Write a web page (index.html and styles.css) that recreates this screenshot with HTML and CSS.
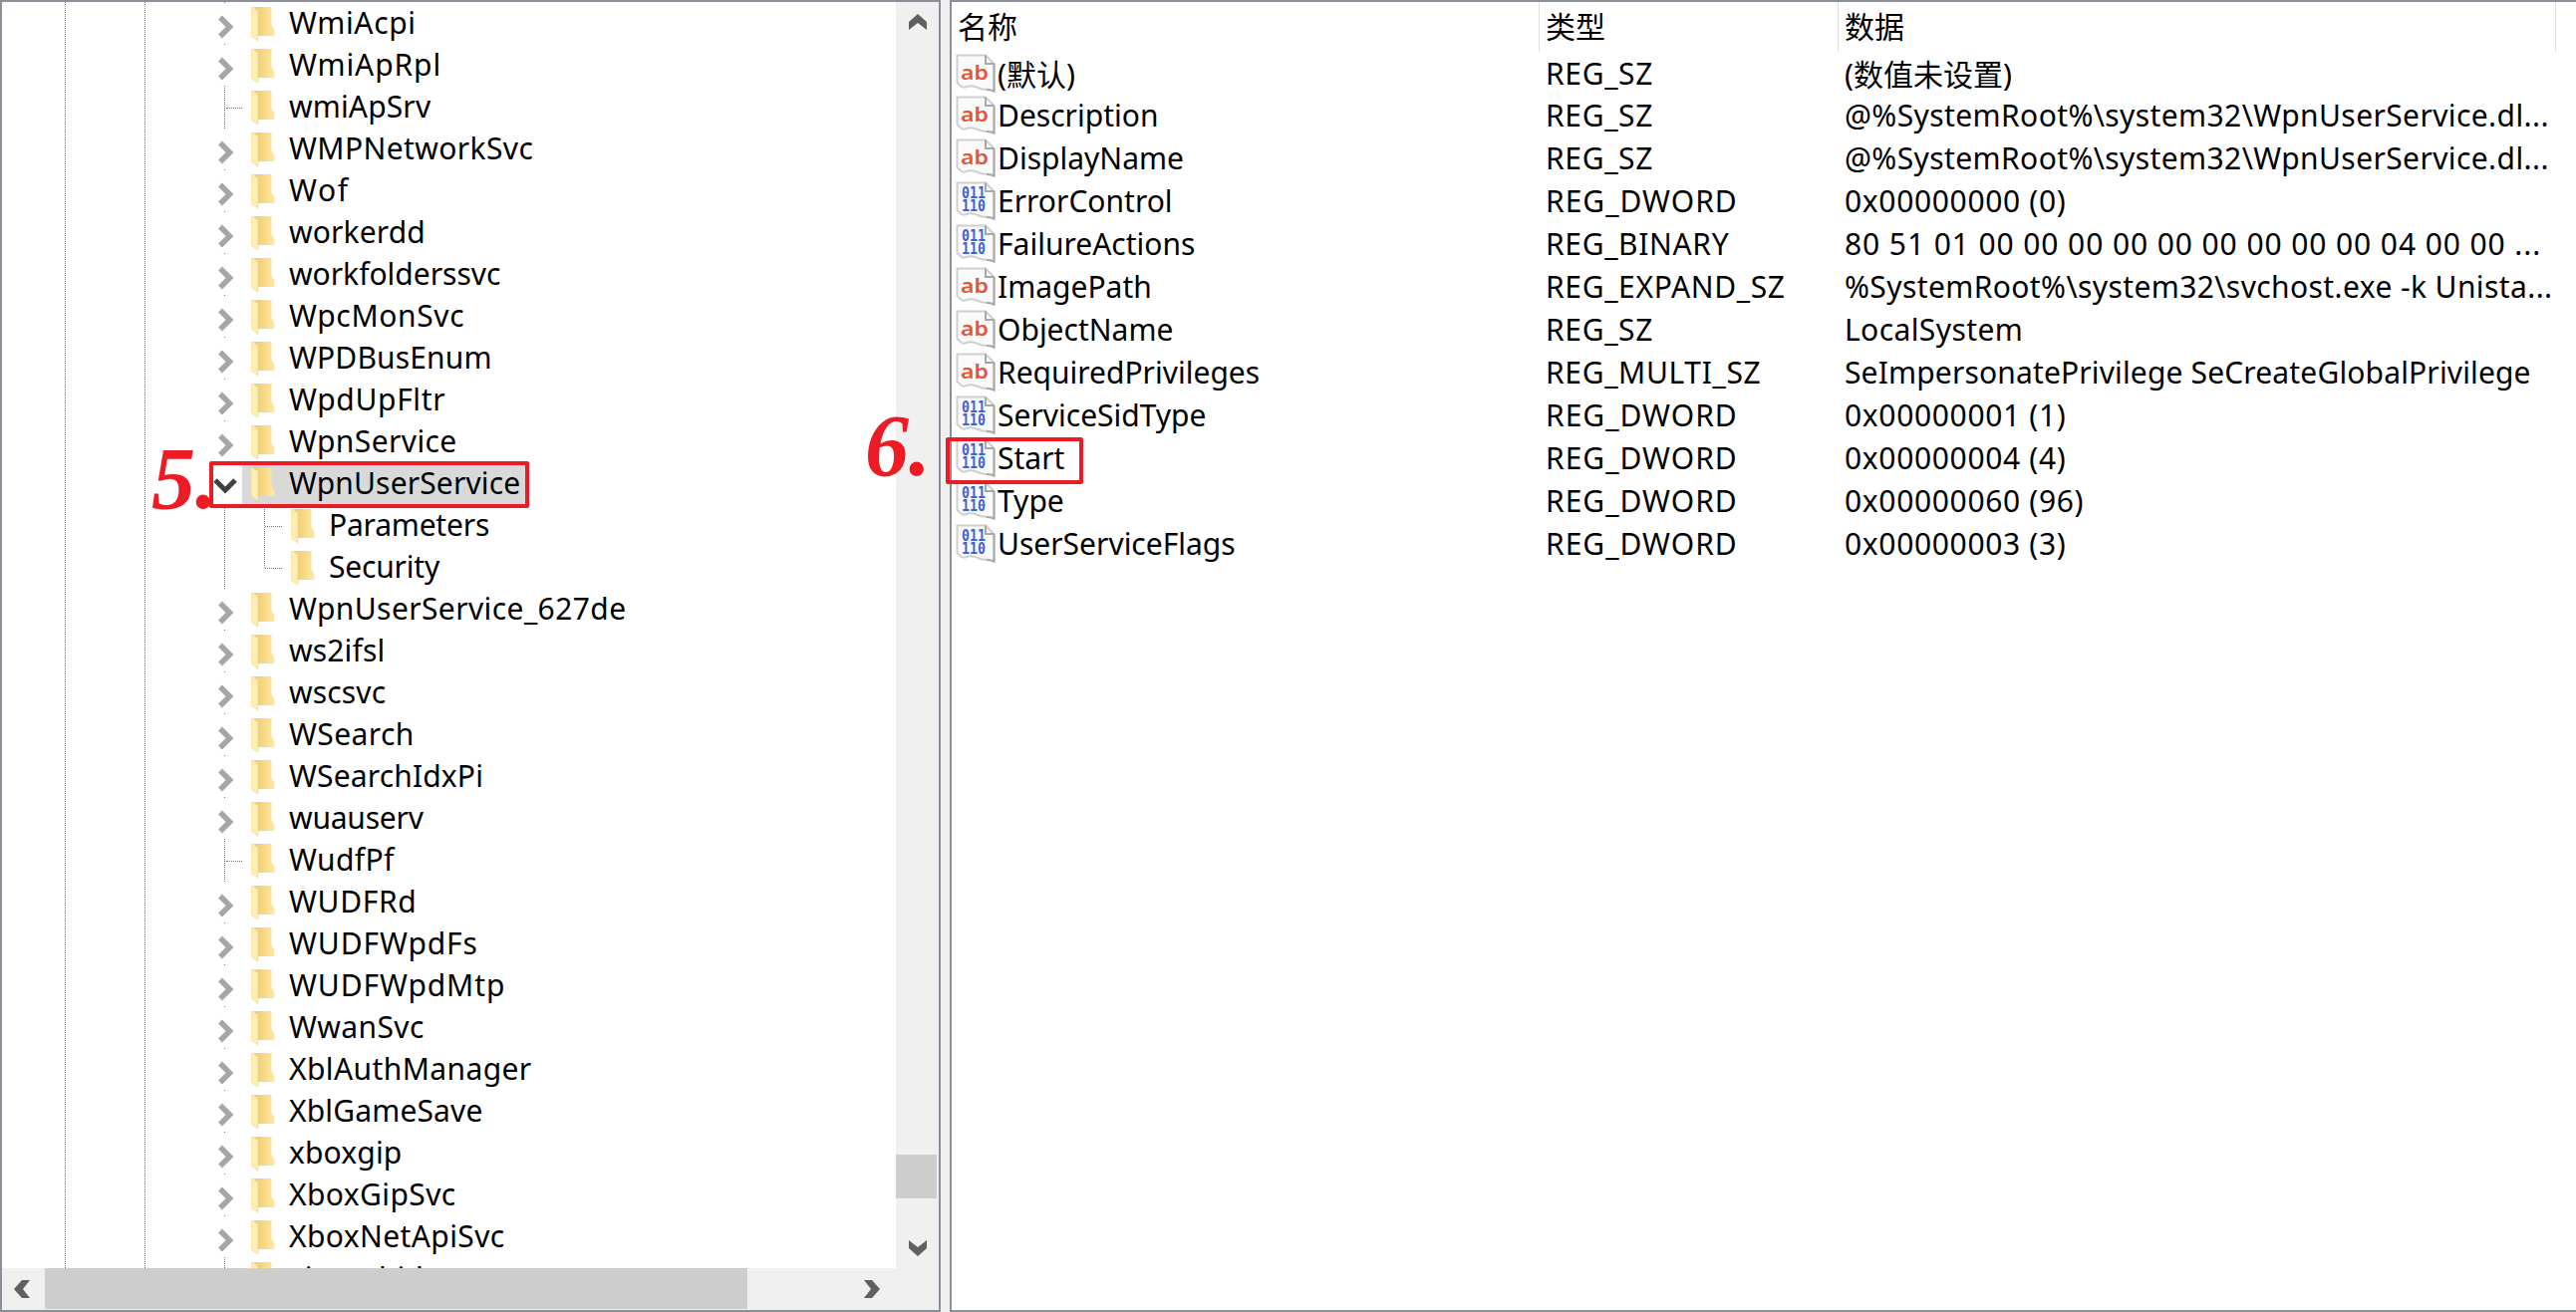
FILE: index.html
```html
<!DOCTYPE html>
<html lang="zh-CN">
<head>
  <meta charset="UTF-8">
  <title>注册表编辑器</title>
  <link rel="stylesheet" href="styles.css">
</head>
<body>

  <!-- icons used by both panes -->
  <svg class="defs" width="0" height="0">
    <defs>
      <linearGradient id="foldGrad" x1="0" x2="1" y1="0" y2="0">
        <stop offset="0" stop-color="#f1c765"/>
        <stop offset="1" stop-color="#fde9a6"/>
      </linearGradient>
      <symbol id="folder" viewBox="0 0 24 35">
        <path d="M2 0H20.5V18L23.5 23V29H7V4Z" fill="url(#foldGrad)"/>
        <path d="M0 0L7 4V34L0 29Z" fill="#fdeeb6" stroke="#edd084" stroke-width=".6"/>
      </symbol>
      <symbol id="closed" viewBox="0 0 33 42">
        <path d="M11 14.5L20.5 24L11 33.5" fill="none" stroke="#a6a6a6" stroke-width="5.5"/>
      </symbol>
      <symbol id="open" viewBox="0 0 33 42">
        <path d="M6 17L16 27L26 17" fill="none" stroke="#404040" stroke-width="5"/>
      </symbol>
      <symbol id="page" viewBox="0 0 40 39">
        <path d="M1.500 1.500H30L38.500 10V37.500C33 34 30 37 25 35S16 31 11 33S5 32 1.500 29Z" fill="#fafafa" stroke="#cfcfcf" stroke-width="2"/>
        <path d="M30 1.500V10H38.500M38.500 10V37.500C36 36.500 34 36 31 36" fill="none" stroke="#a8a8a8" stroke-width="2"/>
      </symbol>
    </defs>
  </svg>

  <div class="window">

    <!-- ====== tree ====== -->
    <section class="tree-pane">
      <div class="tree-view">
        <div class="tree">
          <i class="guide guide-a"></i>
          <i class="guide guide-b"></i>
          <i class="guide guide-c"></i>
          <i class="guide guide-d"></i>

          <div class="row"><span class="twist"><svg><use href="#closed"/></svg></span><span class="node sp-3"><svg class="folder"><use href="#folder"/></svg>WmiAcpi</span></div>
          <div class="row"><span class="twist"><svg><use href="#closed"/></svg></span><span class="node sp-4"><svg class="folder"><use href="#folder"/></svg>WmiApRpl</span></div>
          <div class="row"><span class="twist leaf"></span><span class="node sp-1"><svg class="folder"><use href="#folder"/></svg>wmiApSrv</span></div>
          <div class="row"><span class="twist"><svg><use href="#closed"/></svg></span><span class="node sp-2"><svg class="folder"><use href="#folder"/></svg>WMPNetworkSvc</span></div>
          <div class="row"><span class="twist"><svg><use href="#closed"/></svg></span><span class="node sp-5"><svg class="folder"><use href="#folder"/></svg>Wof</span></div>
          <div class="row"><span class="twist"><svg><use href="#closed"/></svg></span><span class="node sp-1"><svg class="folder"><use href="#folder"/></svg>workerdd</span></div>
          <div class="row"><span class="twist"><svg><use href="#closed"/></svg></span><span class="node"><svg class="folder"><use href="#folder"/></svg>workfolderssvc</span></div>
          <div class="row"><span class="twist"><svg><use href="#closed"/></svg></span><span class="node sp-3"><svg class="folder"><use href="#folder"/></svg>WpcMonSvc</span></div>
          <div class="row"><span class="twist"><svg><use href="#closed"/></svg></span><span class="node sp-1"><svg class="folder"><use href="#folder"/></svg>WPDBusEnum</span></div>
          <div class="row"><span class="twist"><svg><use href="#closed"/></svg></span><span class="node sp-3"><svg class="folder"><use href="#folder"/></svg>WpdUpFltr</span></div>
          <div class="row"><span class="twist"><svg><use href="#closed"/></svg></span><span class="node sp-2"><svg class="folder"><use href="#folder"/></svg>WpnService</span></div>
          <div class="row"><span class="twist"><svg><use href="#open"/></svg></span><span class="node selected sp-1"><svg class="folder"><use href="#folder"/></svg>WpnUserService</span></div>
          <div class="row child"><span class="twist leaf"></span><span class="node sp-0"><svg class="folder"><use href="#folder"/></svg>Parameters</span></div>
          <div class="row child"><span class="twist leaf"></span><span class="node sp-0"><svg class="folder"><use href="#folder"/></svg>Security</span></div>
          <div class="row"><span class="twist"><svg><use href="#closed"/></svg></span><span class="node sp-2"><svg class="folder"><use href="#folder"/></svg>WpnUserService_627de</span></div>
          <div class="row"><span class="twist"><svg><use href="#closed"/></svg></span><span class="node sp-1"><svg class="folder"><use href="#folder"/></svg>ws2ifsl</span></div>
          <div class="row"><span class="twist"><svg><use href="#closed"/></svg></span><span class="node sp-1"><svg class="folder"><use href="#folder"/></svg>wscsvc</span></div>
          <div class="row"><span class="twist"><svg><use href="#closed"/></svg></span><span class="node sp-2"><svg class="folder"><use href="#folder"/></svg>WSearch</span></div>
          <div class="row"><span class="twist"><svg><use href="#closed"/></svg></span><span class="node sp-1"><svg class="folder"><use href="#folder"/></svg>WSearchIdxPi</span></div>
          <div class="row"><span class="twist"><svg><use href="#closed"/></svg></span><span class="node sp-0"><svg class="folder"><use href="#folder"/></svg>wuauserv</span></div>
          <div class="row"><span class="twist leaf"></span><span class="node sp-2"><svg class="folder"><use href="#folder"/></svg>WudfPf</span></div>
          <div class="row"><span class="twist"><svg><use href="#closed"/></svg></span><span class="node sp-3"><svg class="folder"><use href="#folder"/></svg>WUDFRd</span></div>
          <div class="row"><span class="twist"><svg><use href="#closed"/></svg></span><span class="node sp-4"><svg class="folder"><use href="#folder"/></svg>WUDFWpdFs</span></div>
          <div class="row"><span class="twist"><svg><use href="#closed"/></svg></span><span class="node sp-4"><svg class="folder"><use href="#folder"/></svg>WUDFWpdMtp</span></div>
          <div class="row"><span class="twist"><svg><use href="#closed"/></svg></span><span class="node sp-2"><svg class="folder"><use href="#folder"/></svg>WwanSvc</span></div>
          <div class="row"><span class="twist"><svg><use href="#closed"/></svg></span><span class="node sp-2"><svg class="folder"><use href="#folder"/></svg>XblAuthManager</span></div>
          <div class="row"><span class="twist"><svg><use href="#closed"/></svg></span><span class="node sp-1"><svg class="folder"><use href="#folder"/></svg>XblGameSave</span></div>
          <div class="row"><span class="twist"><svg><use href="#closed"/></svg></span><span class="node sp-1"><svg class="folder"><use href="#folder"/></svg>xboxgip</span></div>
          <div class="row"><span class="twist"><svg><use href="#closed"/></svg></span><span class="node sp-2"><svg class="folder"><use href="#folder"/></svg>XboxGipSvc</span></div>
          <div class="row"><span class="twist"><svg><use href="#closed"/></svg></span><span class="node sp-2"><svg class="folder"><use href="#folder"/></svg>XboxNetApiSvc</span></div>
          <div class="row"><span class="twist leaf"></span><span class="node"><svg class="folder"><use href="#folder"/></svg>xinputhid</span></div>
        </div>

        <div class="vbar">
          <svg class="arrow" viewBox="0 0 18 16"><path d="M9 0L18 8V16L9 9L0 16V8Z"/></svg>
          <div class="vbar-track"><div class="vbar-thumb"></div></div>
          <svg class="arrow" viewBox="0 0 18 16"><path d="M9 16L18 8V0L9 7L0 0V8Z"/></svg>
        </div>
      </div>

      <div class="hbar">
        <svg class="arrow-h arrow-left" viewBox="0 0 16 18"><path d="M0 9L8 0H16L9 9L16 18H8Z"/></svg>
        <div class="hbar-thumb"></div>
        <svg class="arrow-h" viewBox="0 0 16 18"><path d="M16 9L8 0H0L7 9L0 18H8Z"/></svg>
      </div>
    </section>

    <!-- ====== values ====== -->
    <section class="list-pane">
      <div class="list-head">
        <div class="head-cell name">名称</div>
        <div class="head-cell type">类型</div>
        <div class="head-cell data">数据</div>
      </div>

      <div class="list-row"><span class="val-name"><svg class="val-icon" viewBox="0 0 40 39"><use href="#page" width="40" height="39"/><text class="ab" x="5" y="26" textLength="28" lengthAdjust="spacingAndGlyphs">ab</text></svg>(默认)</span><span class="val-type">REG_SZ</span><span class="val-data">(数值未设置)</span></div>
      <div class="list-row"><span class="val-name"><svg class="val-icon" viewBox="0 0 40 39"><use href="#page" width="40" height="39"/><text class="ab" x="5" y="26" textLength="28" lengthAdjust="spacingAndGlyphs">ab</text></svg>Description</span><span class="val-type">REG_SZ</span><span class="val-data sp-2">@%SystemRoot%\system32\WpnUserService.dl...</span></div>
      <div class="list-row"><span class="val-name"><svg class="val-icon" viewBox="0 0 40 39"><use href="#page" width="40" height="39"/><text class="ab" x="5" y="26" textLength="28" lengthAdjust="spacingAndGlyphs">ab</text></svg>DisplayName</span><span class="val-type">REG_SZ</span><span class="val-data sp-2">@%SystemRoot%\system32\WpnUserService.dl...</span></div>
      <div class="list-row"><span class="val-name"><svg class="val-icon" viewBox="0 0 40 39"><use href="#page" width="40" height="39"/><text class="bin" x="6" y="17" textLength="24" lengthAdjust="spacingAndGlyphs">011</text><text class="bin" x="6" y="30" textLength="24" lengthAdjust="spacingAndGlyphs">110</text></svg>ErrorControl</span><span class="val-type dword">REG_DWORD</span><span class="val-data sp-3">0x00000000 (0)</span></div>
      <div class="list-row"><span class="val-name"><svg class="val-icon" viewBox="0 0 40 39"><use href="#page" width="40" height="39"/><text class="bin" x="6" y="17" textLength="24" lengthAdjust="spacingAndGlyphs">011</text><text class="bin" x="6" y="30" textLength="24" lengthAdjust="spacingAndGlyphs">110</text></svg>FailureActions</span><span class="val-type">REG_BINARY</span><span class="val-data sp-4">80 51 01 00 00 00 00 00 00 00 00 00 04 00 00 ...</span></div>
      <div class="list-row"><span class="val-name"><svg class="val-icon" viewBox="0 0 40 39"><use href="#page" width="40" height="39"/><text class="ab" x="5" y="26" textLength="28" lengthAdjust="spacingAndGlyphs">ab</text></svg>ImagePath</span><span class="val-type">REG_EXPAND_SZ</span><span class="val-data sp-2">%SystemRoot%\system32\svchost.exe -k Unista...</span></div>
      <div class="list-row"><span class="val-name"><svg class="val-icon" viewBox="0 0 40 39"><use href="#page" width="40" height="39"/><text class="ab" x="5" y="26" textLength="28" lengthAdjust="spacingAndGlyphs">ab</text></svg>ObjectName</span><span class="val-type">REG_SZ</span><span class="val-data sp-2">LocalSystem</span></div>
      <div class="list-row"><span class="val-name"><svg class="val-icon" viewBox="0 0 40 39"><use href="#page" width="40" height="39"/><text class="ab" x="5" y="26" textLength="28" lengthAdjust="spacingAndGlyphs">ab</text></svg>RequiredPrivileges</span><span class="val-type">REG_MULTI_SZ</span><span class="val-data sp-1">SeImpersonatePrivilege SeCreateGlobalPrivilege</span></div>
      <div class="list-row"><span class="val-name"><svg class="val-icon" viewBox="0 0 40 39"><use href="#page" width="40" height="39"/><text class="bin" x="6" y="17" textLength="24" lengthAdjust="spacingAndGlyphs">011</text><text class="bin" x="6" y="30" textLength="24" lengthAdjust="spacingAndGlyphs">110</text></svg>ServiceSidType</span><span class="val-type dword">REG_DWORD</span><span class="val-data sp-3">0x00000001 (1)</span></div>
      <div class="list-row"><span class="val-name"><svg class="val-icon" viewBox="0 0 40 39"><use href="#page" width="40" height="39"/><text class="bin" x="6" y="17" textLength="24" lengthAdjust="spacingAndGlyphs">011</text><text class="bin" x="6" y="30" textLength="24" lengthAdjust="spacingAndGlyphs">110</text></svg>Start</span><span class="val-type dword">REG_DWORD</span><span class="val-data sp-3">0x00000004 (4)</span></div>
      <div class="list-row"><span class="val-name"><svg class="val-icon" viewBox="0 0 40 39"><use href="#page" width="40" height="39"/><text class="bin" x="6" y="17" textLength="24" lengthAdjust="spacingAndGlyphs">011</text><text class="bin" x="6" y="30" textLength="24" lengthAdjust="spacingAndGlyphs">110</text></svg>Type</span><span class="val-type dword">REG_DWORD</span><span class="val-data sp-3">0x00000060 (96)</span></div>
      <div class="list-row"><span class="val-name"><svg class="val-icon" viewBox="0 0 40 39"><use href="#page" width="40" height="39"/><text class="bin" x="6" y="17" textLength="24" lengthAdjust="spacingAndGlyphs">011</text><text class="bin" x="6" y="30" textLength="24" lengthAdjust="spacingAndGlyphs">110</text></svg>UserServiceFlags</span><span class="val-type dword">REG_DWORD</span><span class="val-data sp-3">0x00000003 (3)</span></div>
    </section>

    <!-- red marks drawn over the screenshot -->
    <div class="mark-box box-five"></div>
    <div class="mark-box box-six"></div>
    <div class="mark-num num-five">5.</div>
    <div class="mark-num num-six">6.</div>
  </div>

</body>
</html>
```

FILE: styles.css
```css
/* ====== page ====== */
body {
  margin: 0;
  overflow: hidden;
  background: #f0f0f0;
  font-family: "Noto Sans", "Noto Sans CJK SC", sans-serif;
  font-size: 30px;
  color: #000;
}
.defs {
  display: block;
  height: 0;
}
.window {
  position: relative;
  display: flex;
  gap: 9px;
  width: 2585px;
  height: 1317px;
}

.sp-0 { letter-spacing: -0.2px; }
.sp-1 { letter-spacing: 0.15px; }
.sp-2 { letter-spacing: 0.4px; }
.sp-3 { letter-spacing: 0.65px; }
.sp-4 { letter-spacing: 0.9px; }
.sp-5 { letter-spacing: 1.6px; }

/* ====== tree ====== */
.tree-pane {
  display: flex;
  flex-direction: column;
  box-sizing: border-box;
  width: 944px;
  height: 1317px;
  border: 2px solid #8a8f99;
  background: #f0f0f0;
}
.tree-view {
  display: flex;
  height: 1271px;
}
.tree {
  position: relative;
  width: 897px;
  padding-top: 1px;
  overflow: hidden;
  background: #fff;
}
.guide {
  position: absolute;
  top: 0;
  bottom: 0;
  border-left: 1px dotted #777;
}
.guide-a { left: 63px; }
.guide-b { left: 143px; }
.guide-c { left: 223px; }
.guide-d { left: 263px; top: 504px; bottom: auto; height: 64px; }

.row {
  position: relative;
  display: flex;
  align-items: center;
  height: 42px;
  padding-left: 208px;
  white-space: nowrap;
}
.row.child {
  padding-left: 263px;
}
.twist {
  display: flex;
  align-items: center;
  flex: none;
  width: 33px;
  height: 40px;
  background: #fff;
}
.twist svg {
  width: 33px;
  height: 42px;
}
.twist.leaf {
  background: none;
}
.twist.leaf::before {
  content: "";
  width: 17px;
  margin-left: 17px;
  border-top: 1px dotted #777;
}
.child .twist {
  width: 18px;
}
.child .twist.leaf::before {
  margin-left: 1px;
}
.node {
  display: flex;
  align-items: flex-start;
  gap: 14px;
  height: 42px;
  padding: 0 5px 0 9px;
  line-height: 40px;
}
.node.selected {
  background: #d9d9d9;
}
.folder {
  flex: none;
  width: 24px;
  height: 35px;
  margin-top: 4px;
}

/* ====== scrollbars ====== */
.vbar {
  display: flex;
  flex-direction: column;
  align-items: center;
  width: 43px;
  background: #f0f0f0;
}
.arrow {
  flex: none;
  width: 18px;
  height: 16px;
  margin: 12px 0;
  fill: #606060;
}
.vbar-track {
  flex: 1;
  width: 100%;
}
.vbar-thumb {
  width: 41px;
  height: 44px;
  margin-top: 1117px;
  background: #cdcdcd;
}
.hbar {
  display: flex;
  align-items: center;
  height: 41px;
  background: #f0f0f0;
}
.arrow-h {
  flex: none;
  width: 16px;
  height: 18px;
  margin: 0 12px;
  fill: #606060;
}
.arrow-left {
  margin-right: 15px;
}
.hbar-thumb {
  width: 705px;
  height: 41px;
  margin-right: 105px;
  background: #cdcdcd;
}

/* ====== values ====== */
.list-pane {
  flex: 1;
  box-sizing: border-box;
  height: 1317px;
  border: 2px solid #8a8f99;
  border-right: none;
  background: #fff;
}
.list-head {
  display: grid;
  grid-template-columns: 590px 300px 720px;
  height: 48px;
  margin-bottom: 1px;
}
.head-cell {
  box-sizing: border-box;
  padding: 0 0 0 6px;
  border-right: 1px solid #e0e0e0;
  line-height: 50px;
}
.list-row {
  display: grid;
  grid-template-columns: 590px 300px 720px;
  align-items: center;
  height: 43px;
  white-space: nowrap;
}
.val-name {
  display: flex;
  align-items: center;
  gap: 2px;
  padding-left: 4px;
}
.val-type {
  padding-left: 6px;
  letter-spacing: 0.65px;
}
.val-type.dword {
  letter-spacing: 1px;
}
.val-data {
  padding-left: 6px;
}
.val-icon {
  flex: none;
  width: 40px;
  height: 39px;
}
.ab {
  font-family: "Noto Sans", sans-serif;
  font-size: 20px;
  font-weight: 600;
  fill: #e2573a;
}
.bin {
  font-family: "DejaVu Sans Mono", monospace;
  font-size: 15px;
  font-weight: bold;
  fill: #3c62d8;
}

/* ====== annotations ====== */
.mark-box {
  position: absolute;
  box-sizing: border-box;
  border: 4px solid #ed1c24;
  border-radius: 2px;
}
.box-five { left: 210px; top: 463px; width: 321px; height: 47px; }
.box-six { left: 949px; top: 439px; width: 138px; height: 47px; }
.mark-num {
  position: absolute;
  font-family: "Liberation Serif", serif;
  font-style: italic;
  font-weight: bold;
  font-size: 88px;
  line-height: 88px;
  color: #ed1c24;
}
.num-five { left: 152px; top: 437px; }
.num-six { left: 868px; top: 404px; }
```
